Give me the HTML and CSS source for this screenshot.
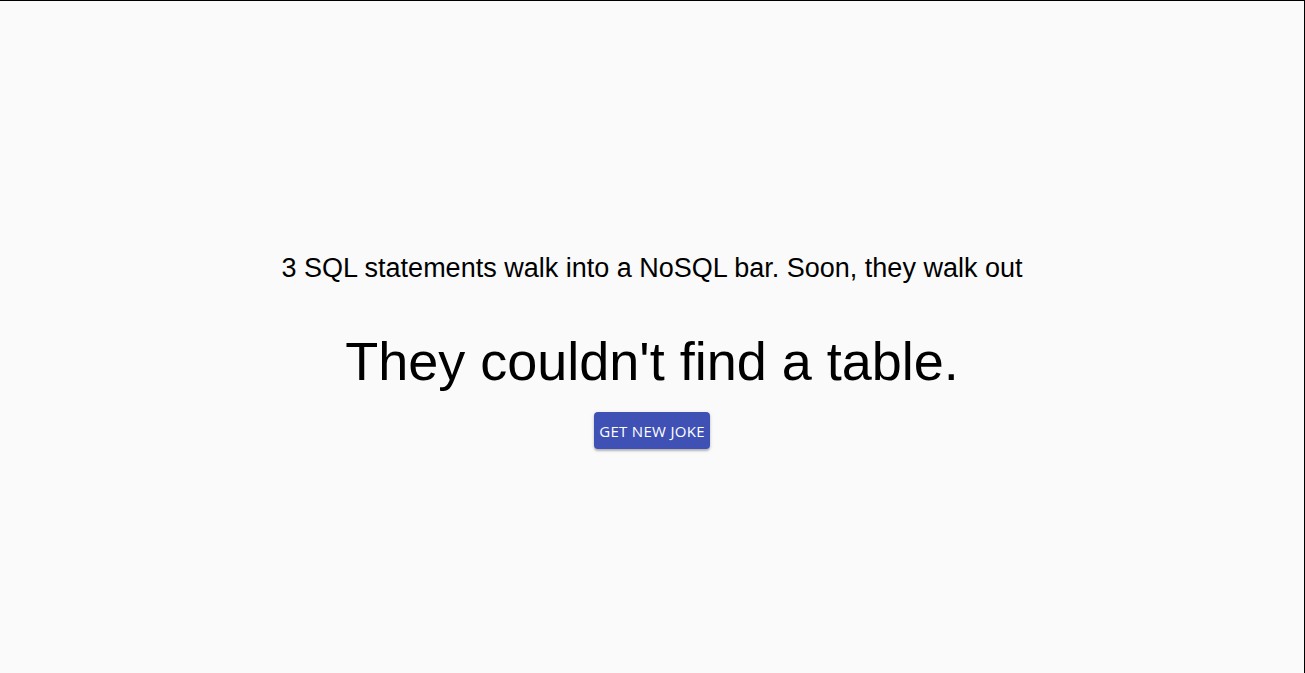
FILE: index.html
```html
<!DOCTYPE html>
<html>
<head>
<meta charset="utf-8">
<link rel="stylesheet" href="styles.css">
</head>
<body>
<div class="frame">
  <main class="joke">
    <p class="setup">3 SQL statements walk into a NoSQL bar. Soon, they walk out</p>
    <h1 class="punchline">They couldn't find a table.</h1>
    <button class="btn">GET NEW JOKE</button>
  </main>
</div>
</body>
</html>
```
FILE: styles.css
```css
html, body {
  margin: 0;
  padding: 0;
}
body {
  background: #fafafa;
  font-family: "Liberation Sans", Arial, sans-serif;
  color: #000;
}
.frame {
  box-sizing: border-box;
  height: 673px;
  border-top: 1px solid #000;
  border-right: 1px solid #000;
  padding-top: 252px;
}
.joke {
  display: flex;
  flex-direction: column;
  align-items: center;
}
.setup {
  font-size: 27px;
  margin: 0 0 46px;
  line-height: 30px;
}
.punchline {
  font-size: 54px;
  font-weight: normal;
  margin: 0 0 19px;
  line-height: 64px;
}
.btn {
  background: #3f51b5;
  color: #fff;
  border: none;
  border-radius: 4px;
  font-family: "Open Sans", "Noto Sans", sans-serif;
  font-size: 15px;
  letter-spacing: 0.3px;
  padding: 0 5px;
  height: 37px;
  width: 116px;
  box-shadow: 0 2px 2px rgba(0,0,0,0.22), 0 1px 4px rgba(0,0,0,0.12);
  cursor: pointer;
}
```
